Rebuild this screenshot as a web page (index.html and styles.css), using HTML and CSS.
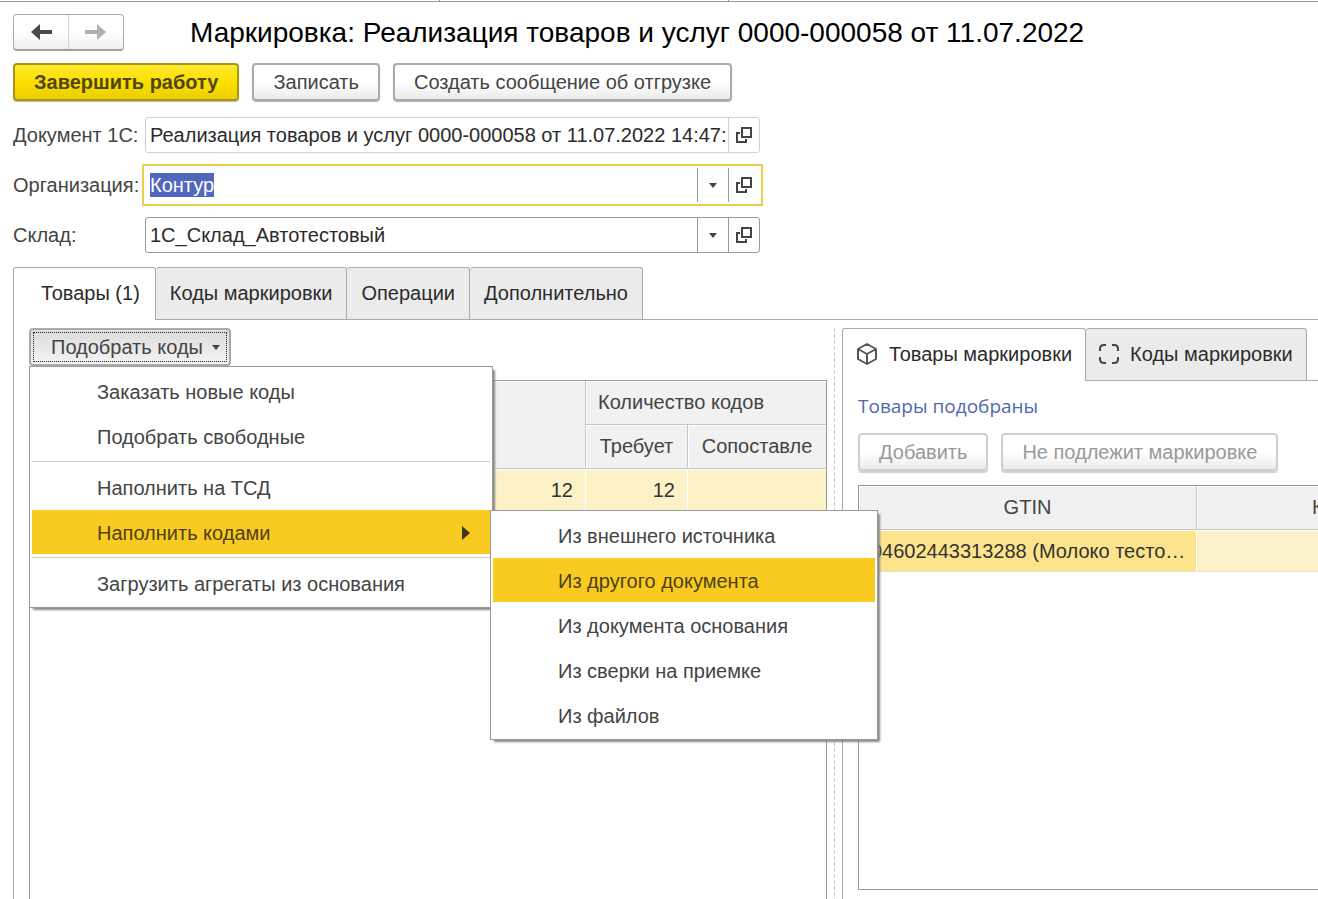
FILE: index.html
```html
<!DOCTYPE html>
<html lang="ru">
<head>
<meta charset="utf-8">
<title>Маркировка</title>
<link rel="stylesheet" href="styles.css">
</head>
<body>
<svg class="sprite" aria-hidden="true">
  <symbol id="open" viewBox="0 0 16 16"><path d="M6 1h9v9H6zM4 6H1v9h9v-3" fill="none" stroke="#444" stroke-width="2"/></symbol>
  <symbol id="down" viewBox="0 0 8 5"><path d="M0 0h8L4 5z" fill="#444"/></symbol>
</svg>
<div class="window-strip"><span></span><span></span><span></span></div>
<header class="title-bar">
  <div class="history">
    <button type="button" aria-label="Назад"><svg width="22" height="16" viewBox="0 0 22 16"><path d="M1 8 10 0v6h12v4H10v6z" fill="#4a4a4a"/></svg></button>
    <button type="button" aria-label="Вперед" disabled><svg width="22" height="16" viewBox="0 0 22 16"><path d="M21 8 12 0v6H0v4h12v6z" fill="#b0b0b0"/></svg></button>
  </div>
  <h1>Маркировка: Реализация товаров и услуг 0000-000058 от 11.07.2022</h1>
</header>
<div class="commands">
  <button type="button" class="btn primary">Завершить работу</button>
  <button type="button" class="btn">Записать</button>
  <button type="button" class="btn">Создать сообщение об отгрузке</button>
</div>
<form class="fields">
  <label for="doc">Документ 1С:</label>
  <div class="field readonly">
    <input id="doc" type="text" readonly value="Реализация товаров и услуг 0000-000058 от 11.07.2022 14:47:">
    <button type="button" aria-label="Открыть документ"><svg width="16" height="16"><use href="#open"/></svg></button>
  </div>
  <label for="org">Организация:</label>
  <div class="field active">
    <input id="org" type="text" value="Контур">
    <button type="button" aria-label="Выбрать организацию"><svg width="8" height="5"><use href="#down"/></svg></button>
    <button type="button" aria-label="Открыть организацию"><svg width="16" height="16"><use href="#open"/></svg></button>
  </div>
  <label for="store">Склад:</label>
  <div class="field">
    <input id="store" type="text" value="1С_Склад_Автотестовый">
    <button type="button" aria-label="Выбрать склад"><svg width="8" height="5"><use href="#down"/></svg></button>
    <button type="button" aria-label="Открыть склад"><svg width="16" height="16"><use href="#open"/></svg></button>
  </div>
</form>
<main class="tabbed">
  <div class="tabs" role="tablist">
    <button type="button" role="tab" class="tab selected first" aria-selected="true">Товары (1)</button>
    <button type="button" role="tab" class="tab">Коды маркировки</button>
    <button type="button" role="tab" class="tab">Операции</button>
    <button type="button" role="tab" class="tab">Дополнительно</button>
  </div>
  <div class="panes">
    <section class="left">
      <div class="picker">
        <button type="button" class="btn pressed" aria-haspopup="menu" aria-expanded="true"><span>Подобрать коды</span><svg width="8" height="5"><use href="#down"/></svg></button>
        <ul class="menu main-menu" role="menu">
          <li><button type="button" role="menuitem">Заказать новые коды</button></li>
          <li><button type="button" role="menuitem">Подобрать свободные</button></li>
          <li class="separator" role="separator"></li>
          <li><button type="button" role="menuitem">Наполнить на ТСД</button></li>
          <li class="parent">
            <button type="button" role="menuitem" class="hot" aria-haspopup="menu"><span>Наполнить кодами</span><svg width="8" height="14" viewBox="0 0 8 14"><path d="M0 0 8 7 0 14z" fill="#40361a"/></svg></button>
            <ul class="menu submenu" role="menu">
              <li><button type="button" role="menuitem">Из внешнего источника</button></li>
              <li><button type="button" role="menuitem" class="hot">Из другого документа</button></li>
              <li><button type="button" role="menuitem">Из документа основания</button></li>
              <li><button type="button" role="menuitem">Из сверки на приемке</button></li>
              <li><button type="button" role="menuitem">Из файлов</button></li>
            </ul>
          </li>
          <li class="separator" role="separator"></li>
          <li><button type="button" role="menuitem">Загрузить агрегаты из основания</button></li>
        </ul>
      </div>
      <div class="grid goods">
        <table>
          <colgroup><col><col class="c-need"><col class="c-match"></colgroup>
          <thead>
            <tr><th rowspan="2"></th><th colspan="2" class="group">Количество кодов</th></tr>
            <tr><th>Требует</th><th>Сопоставле</th></tr>
          </thead>
          <tbody><tr><td class="num">12</td><td class="num">12</td><td></td></tr></tbody>
        </table>
      </div>
    </section>
    <div class="splitter"></div>
    <section class="right">
      <div class="tabs" role="tablist">
        <button type="button" role="tab" class="tab selected" aria-selected="true"><svg width="22" height="22" viewBox="0 0 22 22"><path d="M11 1 20 6v10l-9 5-9-5V6zM2 6l9 5 9-5M11 11v10" fill="none" stroke="#555" stroke-width="2" stroke-linejoin="round"/></svg>Товары маркировки</button>
        <button type="button" role="tab" class="tab"><svg width="20" height="20" viewBox="0 0 20 20"><path d="M1 7V5q0-4 4-4h2M13 1h2q4 0 4 4v2M19 13v2q0 4-4 4h-2M7 19H5q-4 0-4-4v-2" fill="none" stroke="#444" stroke-width="2"/></svg>Коды маркировки</button>
      </div>
      <div class="right-body">
        <a class="status" href="#">Товары подобраны</a>
        <div class="row-buttons">
          <button type="button" class="btn" disabled>Добавить</button>
          <button type="button" class="btn" disabled>Не подлежит маркировке</button>
        </div>
        <div class="grid codes">
          <table>
            <colgroup><col class="c-gtin"><col></colgroup>
            <thead><tr><th>GTIN</th><th class="cut">К</th></tr></thead>
            <tbody><tr><td class="current">04602443313288 (Молоко тесто…</td><td></td></tr></tbody>
          </table>
        </div>
      </div>
    </section>
  </div>
</main>
<script src="script.js"></script>
</body>
</html>
```
FILE: styles.css
```css
* { box-sizing: border-box; }
body {
  margin: 0;
  min-height: 100vh;
  display: flex;
  flex-direction: column;
  overflow-x: hidden;
  background: #fff;
  color: #444;
  font: 20px/24px "Liberation Sans", Arial, sans-serif;
}
button, input { font: inherit; color: inherit; }
button { padding: 0; border: 0; background: none; white-space: nowrap; }
svg { flex: none; }
.sprite { position: absolute; width: 0; height: 0; }

.window-strip { display: flex; height: 2px; border-bottom: 1px solid #999; }
.window-strip span { flex: 288; border-right: 1px solid #999; }
.window-strip span:first-child { flex: 440; }
.window-strip span:last-child { flex: 590; border: 0; }

.title-bar { display: flex; align-items: center; gap: 66px; margin-top: 12px; padding: 0 13px; }
.history { display: flex; width: 111px; height: 37px; border: 1px solid #aaa; border-bottom: 2px solid #a0a0a0; border-radius: 4px; background: linear-gradient(#fff 50%, #efefef); }
.history button { flex: 1; display: flex; align-items: center; justify-content: center; }
.history button + button { border-left: 1px solid #d2d2d2; }
h1 { margin: 0; color: #000; font-size: 28px; line-height: 36px; font-weight: 400; white-space: nowrap; }

.commands { display: flex; gap: 13px; margin-top: 12px; padding: 0 13px; }
.btn { height: 38px; padding: 0 19px; border: 2px solid #aaa; border-radius: 4px; background: linear-gradient(#fff 50%, #ebebeb); box-shadow: 0 1px 1px #b5b5b5; }
.btn:disabled { border-color: #cfcfcf; color: #999; box-shadow: 0 2px 0 #d2d2d2; }
.primary { border-color: #aa9614; background: linear-gradient(#ffea30, #fbdf00 50%, #eccd00); color: #504611; font-weight: 700; }

.fields { display: grid; grid-template-columns: 132px minmax(0, 615px); row-gap: 14px; align-items: center; margin-top: 16px; padding: 0 13px; }
.field { display: flex; height: 36px; border: 1px solid #999; border-radius: 3px; color: #2b2b2b; }
.field input { flex: 1; min-width: 0; padding: 0 0 0 4px; border: 0; outline: 0; background: none; }
.field button { width: 31px; display: flex; align-items: center; justify-content: center; border-left: 1px solid #999; }
.readonly, .readonly button { border-color: #d0d0d0; }
.active { border-color: transparent; border-radius: 0; outline: 2px solid #ebcf4c; outline-offset: 1px; }
.field input::selection { background: #5167bb; color: #fff; }

.tabbed { flex: 1; display: flex; flex-direction: column; margin: 14px 0 0 13px; }
.tabs { display: flex; }
.tabs::after { content: ""; flex: 1; border-bottom: 1px solid #aaa; }
.tab { display: flex; align-items: center; height: 53px; padding: 0 14px 2px; border: 1px solid #aaa; border-left: 0; border-radius: 3px 3px 0 0; background: #ebebeb; color: #2b2b2b; }
.tab.selected { padding-bottom: 3px; border-left: 1px solid #aaa; border-bottom: 0; background: #fff; }
.tab.first { padding-left: 27px; padding-right: 15px; }
.panes { flex: 1; display: grid; grid-template-columns: minmax(0, 798fr) 15px minmax(0, 476fr); padding: 8px 0 0 15px; border-left: 1px solid #aaa; }

.left { display: flex; flex-direction: column; }
.picker { position: relative; display: flex; }
.pressed { display: flex; align-items: center; gap: 9px; padding: 0 9px 0 20px; background: linear-gradient(#dcdcdc, #f3f3f3); outline: 1px dotted #222; outline-offset: -5px; box-shadow: none; }
.menu { position: absolute; z-index: 2; margin: 0; padding: 2px 2px 1px; list-style: none; border: 1px solid #999; background: #fff; box-shadow: 3px 3px 2px -1px #888; }
.main-menu { top: 38px; left: 0; width: 464px; }
.menu li { position: relative; margin-bottom: 1px; }
.menu button { display: flex; align-items: center; justify-content: space-between; width: 100%; height: 44px; padding: 2px 20px 0 65px; text-align: left; }
.menu .hot { background: #f9cb20; color: #4d4118; }
.menu .separator { height: 1px; margin: 3px 0; background: #cfcbc0; }
.submenu { top: 0; left: 100%; width: 388px; }

.grid { flex: 1; border: 1px solid #999; overflow: hidden; }
.goods { margin-top: 14px; border-bottom: 0; }
table { width: 100%; table-layout: fixed; border-collapse: separate; border-spacing: 0; }
th { height: 44px; padding: 0 0 2px; border-right: 1px solid #c6c6c6; border-bottom: 1px solid #c6c6c6; background: #f1f1f1; box-shadow: inset 1px 1px #fff; font-weight: 400; white-space: nowrap; }
th:last-child, td:last-child { border-right: 0; }
td { height: 42px; padding: 0 12px; border-right: 1px solid #fff; border-bottom: 1px solid #e6e0c8; background: #fdf1c7; box-shadow: inset 0 1px #fff; color: #333; white-space: nowrap; }
.num { text-align: right; }
.group { padding-left: 12px; text-align: left; }
.current { background: #fce38c; }
.c-need { width: 102px; }
.c-match { width: 138px; }

.splitter { justify-self: center; width: 1px; background: repeating-linear-gradient(#ccc 0 4px, transparent 4px 6px); }
.right { display: flex; flex-direction: column; }
.right .tab { gap: 11px; padding-left: 13px; padding-right: 13px; }
.right-body { flex: 1; display: flex; flex-direction: column; padding: 13px 0 9px 15px; border-left: 1px solid #aaa; }
.status { color: #5167ae; font-family: "Open Sans", "Noto Sans", sans-serif; font-size: 19px; text-decoration: none; }
.row-buttons { display: flex; gap: 13px; margin-top: 15px; }
.codes { margin-top: 14px; border-right: 0; }
.c-gtin { width: 338px; }
.cut { padding-left: 115px; text-align: left; }
```
FILE: script.js
```js
const organization = document.getElementById('org');
organization.focus();
organization.select();
```
